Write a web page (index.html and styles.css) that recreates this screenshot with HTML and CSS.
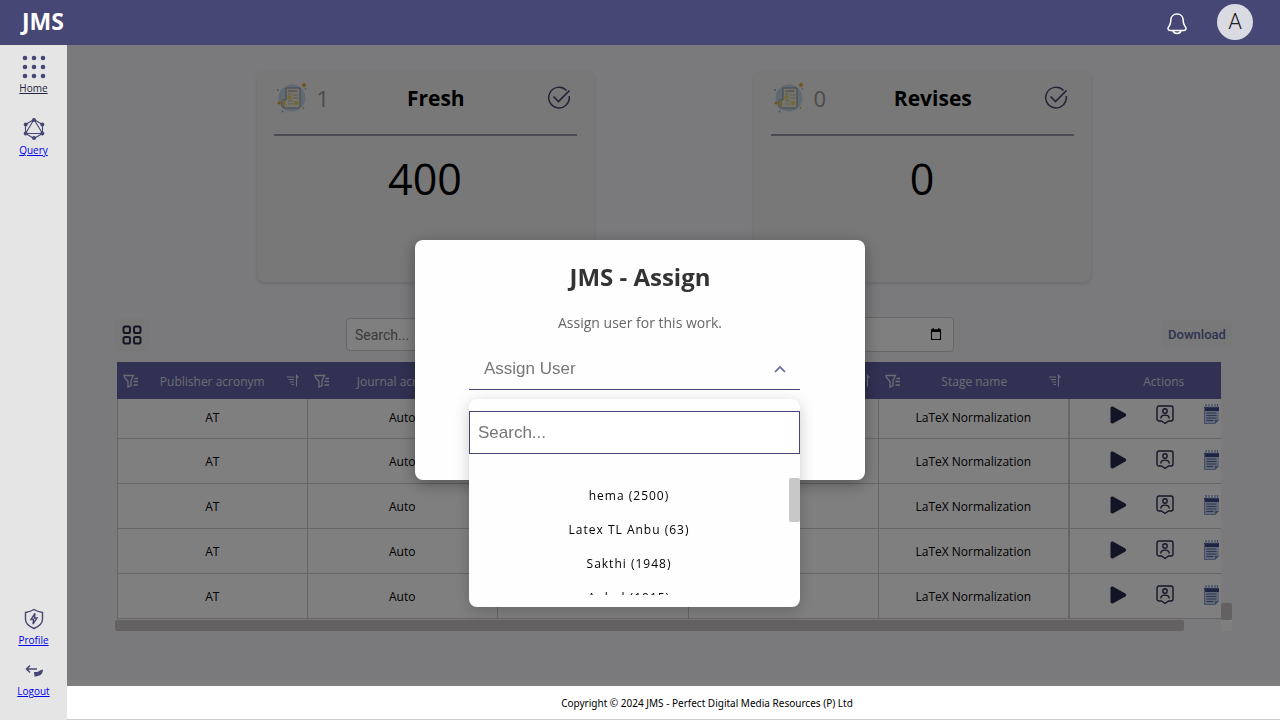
FILE: index.html
```html
<!DOCTYPE html>
<html lang="en">
<head>
<meta charset="utf-8">
<title>JMS</title>
<link rel="stylesheet" href="styles.css">
</head>
<body>
<svg class="sprite" aria-hidden="true">
  <symbol id="filter" viewBox="0 0 16 14"><path d="M1 1.500h9.500L8 6.500v5L5 13V7.500L1.500 3.500zM11.500 4.500H15M10.500 7.500H15M10.500 11H15" fill="none" stroke="currentColor" stroke-width="1.300"/></symbol>
  <symbol id="sort" viewBox="0 0 14 14"><path d="M1 3h7M2.500 5.500H8M4 8h4M5.500 10.500H8M10.500 12.500V1.500l2 2.500" fill="none" stroke="currentColor" stroke-width="1.200"/></symbol>
  <symbol id="play" viewBox="0 0 17 18"><path d="M.5 2.200C.5.600 2 .100 3.300.800l12 6.800c1.200.700 1.200 2.100 0 2.800l-12 6.800C2 17.900.500 17.300.500 15.800z" fill="#252a4a"/></symbol>
  <symbol id="badge" viewBox="0 0 18 20"><g fill="none" stroke="#2b2d50" stroke-width="1.400"><path d="M3 1h12c1 0 2 .800 2 2v11c0 1-.8 2-2 2h-2.500L9 18.500 5.500 16H3c-1.200 0-2-1-2-2V3c0-1.200 1-2 2-2z"/><circle cx="9" cy="6" r="2.200"/><path d="M4.800 13.500c0-4.500 8.400-4.500 8.400 0"/></g></symbol>
  <symbol id="notes" viewBox="0 0 17 21"><path d="M1 3h15v13l-4 4H1z" fill="#c3d3f2"/><path d="M1 3h15v4H1z" fill="#3c4a86"/><path d="M3 0v4M6 0v4M9 0v4M12 0v4M14.500 0v4" stroke="#7f9ad0" stroke-width="1.200"/><path d="M3.500 9h10M3.500 11.500h10M3.500 14h10M3.500 16.500h7" stroke="#5a6898"/><path d="M12 20v-4h4z" fill="#6f8fd0"/><path d="M1.500 4v15.500H12" fill="none" stroke="#8aa0d0"/></symbol>
  <symbol id="tick" viewBox="0 0 24 24"><g fill="none" stroke="#464775" stroke-width="1.500"><path d="M19.500 4.500A10.300 10.300 0 1 0 22.200 10"/><path d="M6.500 10.500l5 5L22.500 4.500" stroke-width="1.700"/></g></symbol>
  <symbol id="paper" viewBox="0 0 30 31"><circle cx="15" cy="16" r="13.500" fill="#c0d4e4"/><path d="M9 6h14v17c0 2-1 3-2 3H7c-1.500 0-2-1-2-2v-6h4z" fill="#ece8d4" stroke="#8a8f9c"/><path d="M5 18h3v7H6c-1 0-1-5-1-7z" fill="#e0c56a"/><path d="M11 9h9" stroke="#b8b8b8" stroke-width="2"/><path d="M16 13h5M16 16h5M11 19h5M11 22h5M11 12h4" stroke="#b8b8b8"/><path d="M10.500 13.500h4v4h-4zM17 19h4v4h-4z" fill="#e6d66a"/><circle cx="27" cy="3" r="1.800" fill="#e0a52e"/><path d="M24.500 3h5M27 .5v5" stroke="#e0a52e" stroke-width=".8"/><circle cx="2" cy="21" r="1.500" fill="#e0a52e"/><g fill="#8fa6d0"><circle cx="1" cy="8" r=".9"/><circle cx="28.500" cy="7" r=".8"/><circle cx="5.500" cy="29.500" r="1"/></g><circle cx="26.500" cy="26" r=".9" fill="#e0b04a"/></symbol>
</svg>

<header class="topbar">
  <div class="brand">JMS</div>
  <button class="bell" aria-label="Notifications"><svg width="22" height="24" viewBox="0 0 22 24" fill="none" stroke="#fff" stroke-width="1.500"><path d="M11 2C7 2 4.800 5 4.800 8.500c0 4-.8 4.500-2.300 6.500-1 1.500-.5 3.500 1.500 3.500h14c2 0 2.500-2 1.500-3.500-1.500-2-2.300-2.500-2.300-6.500C17.200 5 15 2 11 2z"/><path d="M7 18.800c1 3.600 7 3.600 8 0"/></svg></button>
  <button class="avatar">A</button>
</header>

<div class="shell">
  <nav class="sidebar">
    <div class="nav-group">
      <a class="nav-item home" href="#home"><svg width="24" height="24" viewBox="0 0 24 24" fill="#464775"><circle cx="3" cy="3" r="2.300"/><circle cx="12" cy="3" r="2.300"/><circle cx="21" cy="3" r="2.300"/><circle cx="3" cy="12" r="2.300"/><circle cx="12" cy="12" r="2.300"/><circle cx="21" cy="12" r="2.300"/><circle cx="3" cy="21" r="2.300"/><circle cx="12" cy="21" r="2.300"/><circle cx="21" cy="21" r="2.300"/></svg><span>Home</span></a>
      <a class="nav-item" href="#query"><svg width="24" height="24" viewBox="0 0 24 24" fill="#464775"><path d="M12 2.500l8.500 5v9L12 21.500l-8.500-5v-9zM12 2.500l8.500 14h-17z" fill="none" stroke="#464775" stroke-width="1.100"/><circle cx="12" cy="3" r="2"/><circle cx="20.300" cy="7.500" r="2"/><circle cx="20.300" cy="16.500" r="2"/><circle cx="12" cy="21" r="2"/><circle cx="3.700" cy="16.500" r="2"/><circle cx="3.700" cy="7.500" r="2"/></svg><span>Query</span></a>
    </div>
    <div class="nav-group bottom">
      <a class="nav-item" href="#profile"><svg width="22" height="22" viewBox="0 0 22 22" fill="none" stroke="#464775" stroke-width="1.400"><path d="M11 1.500c3 2 5.500 2.500 8.500 3v7c0 4-4 7-8.500 9-4.500-2-8.500-5-8.500-9v-7c3-.5 5.500-1 8.500-3z"/><path d="M12 5.500L8 11.500h2.500l-.5 4.500 4-6h-2.500z"/></svg><span>Profile</span></a>
      <a class="nav-item" href="#logout"><svg width="20" height="18" viewBox="0 0 20 18" fill="none" stroke="#464775" stroke-width="1.500"><path d="M13 6H2.500M6 2.500L2.500 6 6 9.500"/><path d="M10 9h3c2 0 3-2.500 6-2.500 0 5-4 7-8.500 7z" fill="#464775" stroke="none"/></svg><span>Logout</span></a>
    </div>
  </nav>

  <div class="page">
    <main class="content">
      <section class="cards">
        <article class="card">
          <div class="card-head"><svg width="30" height="31"><use href="#paper"/></svg><span class="count">1</span><h2>Fresh</h2><svg width="24" height="24"><use href="#tick"/></svg></div>
          <p class="total">400</p>
        </article>
        <article class="card">
          <div class="card-head"><svg width="30" height="31"><use href="#paper"/></svg><span class="count">0</span><h2>Revises</h2><svg width="24" height="24"><use href="#tick"/></svg></div>
          <p class="total">0</p>
        </article>
      </section>

      <section class="toolbar">
        <button class="grid-btn" aria-label="Grid view"><svg width="20" height="20" viewBox="0 0 20 20" fill="none" stroke="#2b2a4c" stroke-width="2"><rect x="1.500" y="1.500" width="6.500" height="6.500" rx="1.800"/><rect x="12" y="1.500" width="6.500" height="6.500" rx="1.800"/><rect x="1.500" y="12" width="6.500" height="6.500" rx="1.800"/><rect x="12" y="12" width="6.500" height="6.500" rx="1.800"/></svg></button>
        <div class="filters">
          <input class="search" type="text" placeholder="Search..." aria-label="Search table">
          <button class="date" aria-label="Pick a date"><svg width="12" height="13" viewBox="0 0 12 13"><path d="M1.500 2h9v9.500h-9z" fill="none" stroke="#000" stroke-width="1.100"/><path d="M1 1.500h10v2.500H1zM2.500 0h1.200v2H2.500zM8.300 0h1.200v2H8.300z"/></svg></button>
        </div>
        <button class="download">Download</button>
      </section>

      <section class="grid">
        <div class="viewport">
          <table>
            <thead><tr>
              <th><div class="th"><svg width="16" height="14"><use href="#filter"/></svg><span>Publisher acronym</span><svg width="14" height="14"><use href="#sort"/></svg></div></th>
              <th><div class="th"><svg width="16" height="14"><use href="#filter"/></svg><span>Journal acronym</span><svg width="14" height="14"><use href="#sort"/></svg></div></th>
              <th><div class="th"></div></th>
              <th><div class="th"><svg width="16" height="14"><use href="#filter"/></svg><span></span><svg width="14" height="14"><use href="#sort"/></svg></div></th>
              <th><div class="th"><svg width="16" height="14"><use href="#filter"/></svg><span>Stage name</span><svg width="14" height="14"><use href="#sort"/></svg></div></th>
              <th class="act"><div class="th"><span>Actions</span></div></th>
            </tr></thead>
            <tbody>
              <tr class="partial"><td>AT</td><td>Auto</td><td></td><td></td><td>LaTeX Normalization</td><td class="act"><div class="actions"><button aria-label="Start"><svg width="17" height="18"><use href="#play"/></svg></button><button aria-label="Assign"><svg width="18" height="20"><use href="#badge"/></svg></button><button aria-label="Notes"><svg width="17" height="21"><use href="#notes"/></svg></button></div></td></tr>
              <tr><td>AT</td><td>Auto</td><td></td><td></td><td>LaTeX Normalization</td><td class="act"><div class="actions"><button aria-label="Start"><svg width="17" height="18"><use href="#play"/></svg></button><button aria-label="Assign"><svg width="18" height="20"><use href="#badge"/></svg></button><button aria-label="Notes"><svg width="17" height="21"><use href="#notes"/></svg></button></div></td></tr>
              <tr><td>AT</td><td>Auto</td><td></td><td></td><td>LaTeX Normalization</td><td class="act"><div class="actions"><button aria-label="Start"><svg width="17" height="18"><use href="#play"/></svg></button><button aria-label="Assign"><svg width="18" height="20"><use href="#badge"/></svg></button><button aria-label="Notes"><svg width="17" height="21"><use href="#notes"/></svg></button></div></td></tr>
              <tr><td>AT</td><td>Auto</td><td></td><td></td><td>LaTeX Normalization</td><td class="act"><div class="actions"><button aria-label="Start"><svg width="17" height="18"><use href="#play"/></svg></button><button aria-label="Assign"><svg width="18" height="20"><use href="#badge"/></svg></button><button aria-label="Notes"><svg width="17" height="21"><use href="#notes"/></svg></button></div></td></tr>
              <tr><td>AT</td><td>Auto</td><td></td><td></td><td>LaTeX Normalization</td><td class="act"><div class="actions"><button aria-label="Start"><svg width="17" height="18"><use href="#play"/></svg></button><button aria-label="Assign"><svg width="18" height="20"><use href="#badge"/></svg></button><button aria-label="Notes"><svg width="17" height="21"><use href="#notes"/></svg></button></div></td></tr>
            </tbody>
          </table>
        </div>
        <div class="vbar"><div class="thumb"></div></div>
        <div class="hbar"><div class="thumb"></div></div>
        <div class="corner"></div>
      </section>
    </main>
    <footer class="footer">Copyright © 2024 JMS - Perfect Digital Media Resources (P) Ltd</footer>
  </div>
</div>

<div class="overlay">
  <div class="modal" role="dialog" aria-labelledby="dlg-title">
    <h1 id="dlg-title">JMS - Assign</h1>
    <p>Assign user for this work.</p>
    <div class="select">
      <button class="select-btn" aria-expanded="true"><span>Assign User</span><svg width="12" height="8" viewBox="0 0 12 8" fill="none" stroke="#6264a7" stroke-width="1.700"><path d="M1 7l5-5 5 5"/></svg></button>
      <div class="menu">
        <input type="text" placeholder="Search..." aria-label="Search user">
        <div class="options">
          <ul>
            <li><button>hema (2500)</button></li>
            <li><button>Latex TL Anbu (63)</button></li>
            <li><button>Sakthi (1948)</button></li>
            <li><button>Anbul (1915)</button></li>
          </ul>
          <div class="options-bar"><div class="options-thumb"></div></div>
        </div>
      </div>
    </div>
  </div>
</div>
</body>
</html>
```
FILE: styles.css
```css
* { box-sizing: border-box; }
body {
  margin: 0;
  height: 100vh;
  display: flex;
  flex-direction: column;
  overflow: hidden;
  font-family: "Open Sans", "Noto Sans", sans-serif;
  font-size: 12px;
  color: #000;
}
button { padding: 0; border: 0; background: none; font: inherit; color: inherit; }
svg { display: block; flex: none; }
h1, h2, p, ul { margin: 0; padding: 0; }
.sprite { position: absolute; width: 0; height: 0; }

.topbar {
  position: relative;
  z-index: 10;
  flex: none;
  height: 45px;
  padding: 0 27px 2px 22px;
  display: flex;
  align-items: center;
  background: #464775;
  color: #fff;
}
.brand { font-size: 23px; line-height: 30px; font-weight: 700; margin: 0 auto 2px 0; }
.bell { margin: 5px 29px 0 0; }
.avatar {
  width: 36px;
  height: 36px;
  border-radius: 50%;
  background: #dadae3;
  color: #222;
  font-family: Roboto, sans-serif;
  font-size: 22px;
  font-weight: 300;
}

.shell { flex: 1; min-height: 0; display: flex; }
.sidebar {
  position: relative;
  z-index: 10;
  flex: none;
  width: 67px;
  padding: 10px 0 22px;
  display: flex;
  flex-direction: column;
  justify-content: space-between;
  background: #e5e5e5;
}
.nav-group { display: flex; flex-direction: column; gap: 22px; }
.nav-group.bottom { gap: 16px; }
.nav-item {
  display: flex;
  flex-direction: column;
  align-items: center;
  gap: 2px;
  font-size: 10px;
  line-height: 14px;
  color: #0000ee;
}
.nav-group.bottom .nav-item { gap: 3px; }
.nav-item.home { color: #252440; }

.page { flex: 1; min-width: 0; display: flex; flex-direction: column; }
.content {
  flex: 1;
  min-height: 0;
  padding: 25px 48px 0;
  background: #f5f5f9;
  border-bottom: 6px solid #fff;
}
.footer {
  position: relative;
  z-index: 10;
  flex: none;
  height: 34px;
  padding-left: 67px;
  display: flex;
  align-items: center;
  justify-content: center;
  background: #fff;
  border-bottom: 1px solid #ccc;
  font-family: "Noto Sans", sans-serif;
  font-size: 10px;
}

.cards { display: flex; justify-content: center; gap: 160px; }
.card {
  width: 337px;
  height: 212px;
  padding: 0 17px;
  border-radius: 8px;
  background: #f0f0f0;
  box-shadow: 0 2px 4px rgba(0, 0, 0, .12);
}
.card-head {
  height: 66px;
  padding: 0 6px 9px 3px;
  display: flex;
  align-items: center;
  border-bottom: 2px solid #9494a0;
}
.count { margin-left: 10px; font-size: 22px; color: #969699; }
.card-head h2 { flex: 1; padding-right: 4px; text-align: center; font-size: 21px; font-weight: 700; }
.total { margin-top: 11px; text-align: center; font-size: 43px; line-height: 64px; }

.toolbar { display: flex; align-items: center; height: 35px; margin-top: 35px; }
.grid-btn {
  width: 34px;
  height: 33px;
  display: flex;
  align-items: center;
  justify-content: center;
  border-radius: 4px;
  background: #f0f0f0;
}
.filters { flex: 1; margin: 0 208px 0 197px; display: flex; justify-content: space-between; align-items: center; }
.search, .date { border: 1px solid #ccc; border-radius: 4px; background: #fff; }
.search { width: 160px; height: 33px; padding: 0 8px; font: 14px Roboto, sans-serif; }
.date { width: 160px; height: 35px; padding-right: 11px; display: flex; align-items: center; justify-content: flex-end; }
.download {
  width: 70px;
  height: 27px;
  border-radius: 4px;
  background: #f0f0f0;
  color: #6264a7;
  font: 500 13px Roboto, sans-serif;
}

.grid { display: grid; grid-template-columns: 1fr 11px; grid-template-rows: 258px 11px; margin-top: 10px; }
.viewport { overflow: hidden; padding-left: 2px; }
table { width: 1143px; table-layout: fixed; border-collapse: separate; border-spacing: 0; background: #fff; }
th, td { height: 45px; padding: 1px 0 0; text-align: center; border-right: 1px solid #ccc; border-bottom: 1px solid #ccc; }
td:first-child { border-left: 1px solid #ccc; }
td:nth-child(5) { border-right-width: 2px; }
th { height: 37px; background: #6264a7; color: #fff; font-weight: 400; border: 0; }
.th { display: flex; align-items: center; justify-content: space-between; padding: 0 8px 0 6px; color: #d8d8ea; }
.th span { flex: 1; text-align: center; }
.partial td { height: 40px; padding-bottom: 4px; }
tbody .act { padding-bottom: 3px; }
.partial .act { padding-bottom: 9px; }
.actions { display: flex; align-items: center; gap: 29px; padding-left: 40px; }

.vbar { display: flex; flex-direction: column; justify-content: flex-end; }
.vbar .thumb { height: 17px; }
.hbar .thumb { width: 1069px; height: 11px; }
.thumb { border-radius: 2px; background: #c8c2c4; }
.corner { background: #fff; }

.overlay {
  position: fixed;
  inset: 0;
  z-index: 5;
  display: flex;
  align-items: center;
  justify-content: center;
  background: rgba(0, 0, 0, .5);
}
.modal {
  width: 450px;
  height: 240px;
  padding: 19px 65px 20px 54px;
  border-radius: 8px;
  background: #fefefe;
  box-shadow: 0 4px 16px rgba(0, 0, 0, .35);
}
.modal h1, .modal p { margin-right: -11px; text-align: center; }
.modal h1 { font-size: 24px; line-height: 36px; color: #333; }
.modal p { margin-top: 17px; font-size: 14px; line-height: 22px; color: #666; }
.select { position: relative; margin-top: 14px; }
.select-btn {
  width: 100%;
  height: 42px;
  padding: 0 14px 0 15px;
  display: flex;
  align-items: center;
  justify-content: space-between;
  border-bottom: 1px solid #464775;
  font: 17px "Liberation Sans", sans-serif;
  color: #777;
}
.menu {
  position: absolute;
  top: 51px;
  left: 0;
  right: 0;
  padding: 12px 0;
  border-radius: 8px;
  background: #fefefe;
  box-shadow: 0 4px 16px rgba(0, 0, 0, .2);
}
.menu input {
  display: block;
  width: 100%;
  height: 43px;
  padding: 0 8px;
  border: 1px solid #464775;
  background: #fff;
  font: 17px "Liberation Sans", sans-serif;
}
.options { display: flex; height: 117px; margin-top: 24px; overflow: hidden; }
.options ul { flex: 1; list-style: none; }
.options li button { display: block; width: 100%; height: 34px; letter-spacing: 1px; }
.options-bar { width: 11px; }
.options-thumb { height: 44px; border-radius: 2px; background: #c8c8c8; }
```
